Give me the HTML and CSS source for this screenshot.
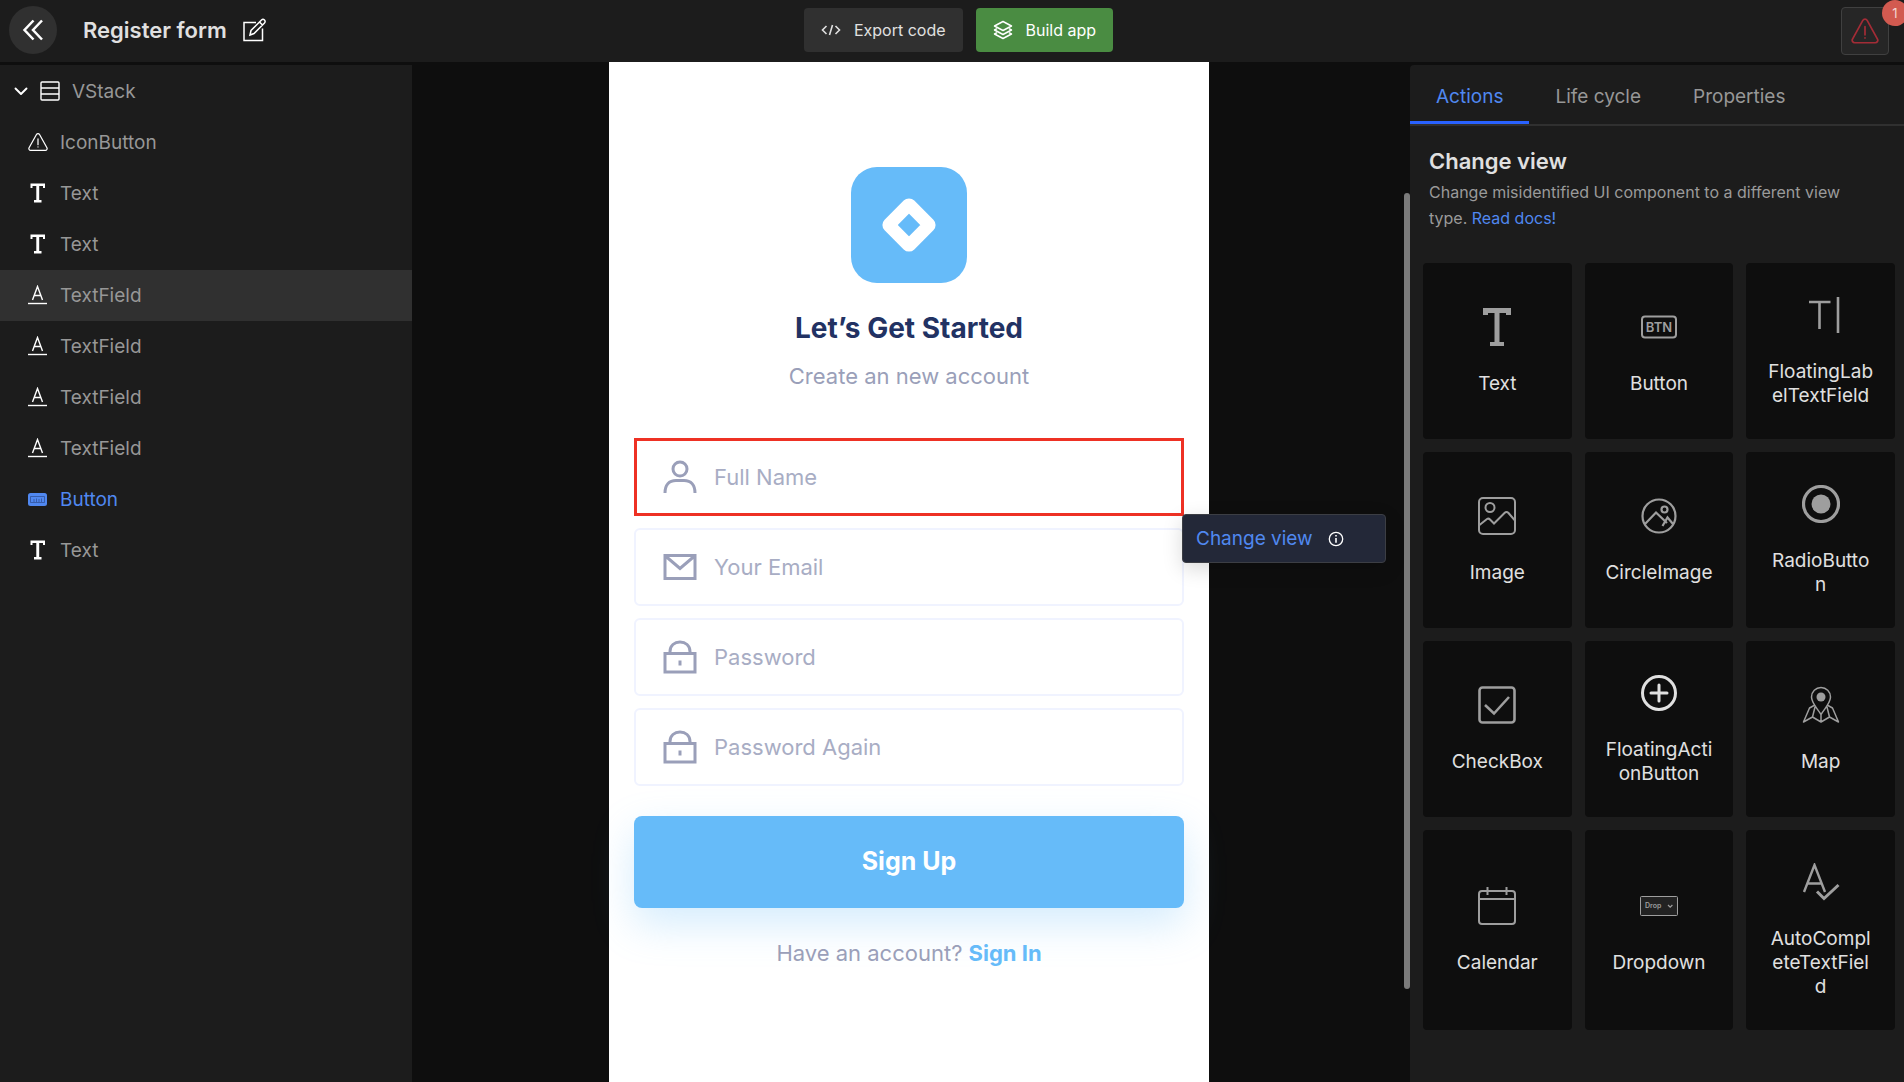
FILE: index.html
```html
<!DOCTYPE html>
<html lang="en">
<head>
<meta charset="utf-8">
<meta name="viewport" content="width=device-width, initial-scale=1">
<title>Register form</title>
<link rel="stylesheet" href="styles.css">
</head>
<body>
<svg class="sprite" aria-hidden="true">
  <symbol id="i-text" viewBox="0 0 20 20"><path d="M2.500 0.500h14.500V5h-2V3H11.200v14H13.500v2.500H6V17h2.300V3H4.500v2h-2z" fill="currentColor"/></symbol>
  <symbol id="i-field" viewBox="0 0 20 20" fill="none" stroke="currentColor"><path d="M4.500 15 9.500 1.500 14.500 15M6.100 10.500h6.800" stroke-width="1.400"/><path d="M0 18.500h19" stroke-width="1.400"/></symbol>
  <symbol id="i-warn" viewBox="0 0 26 24" fill="none" stroke="currentColor" stroke-width="1.600" stroke-linecap="round"><path d="M11 2.200a2.300 2.300 0 0 1 4 0l9.600 17.300a2.300 2.300 0 0 1-2 3.400H3.400a2.300 2.300 0 0 1-2-3.400z"/><path d="M13 8v7.500M13 18.400v.1"/></symbol>
  <symbol id="i-lock" viewBox="0 0 34 34" fill="none" stroke="currentColor" stroke-width="3"><path d="M2 13.500h30v18.500H2zM7 13V11.500C7 5.500 11.500 2 17 2s10 3.500 10 9.500V13M17 20.500v5"/></symbol>
</svg>

<div class="app">
  <header class="topbar">
    <div class="project">
      <button class="back" type="button" aria-label="Back"><svg width="22" height="22" viewBox="0 0 22 22" fill="none" stroke="currentColor" stroke-width="2.500"><path d="M11.500 1.500 2.500 11l9 9.500M20 1.500 11 11l9 9.500"/></svg></button>
      <h1 class="title">Register form</h1>
      <button class="plain" type="button" aria-label="Rename"><svg width="24" height="24" viewBox="0 0 24 24" fill="none" stroke="currentColor" stroke-width="1.500"><path d="M14 4.500H2V22.500H20.500V10.500M8 17l1-4.500L19.500 2a1.900 1.900 0 0 1 3 3L12 15.500zM17.500 4l3 3"/></svg></button>
    </div>
    <div class="commands">
      <button class="cmd" type="button"><svg width="20" height="12" viewBox="0 0 20 12" fill="none" stroke="currentColor" stroke-width="1.600"><path d="M5.500 2 1.500 6l4 4M14.500 2l4 4-4 4M11.500 1l-3 10"/></svg>Export code</button>
      <button class="cmd build" type="button"><svg width="20" height="20" viewBox="0 0 20 20" fill="none" stroke="currentColor" stroke-width="1.500" stroke-linejoin="round"><path d="M10 1.500 18.500 6 10 10.500 1.500 6zM4 8.600 1.500 10 10 14.500 18.500 10 16 8.600M4 12.600 1.500 14 10 18.500 18.500 14 16 12.600"/></svg>Build app</button>
    </div>
    <button class="alert" type="button" aria-label="Warnings"><svg width="28" height="26"><use href="#i-warn"/></svg><span class="badge">1</span></button>
  </header>

  <div class="workspace">
    <nav class="tree">
      <button class="node root" type="button"><svg width="14" height="9" viewBox="0 0 14 9" fill="none" stroke="currentColor" stroke-width="1.900" stroke-linecap="round" stroke-linejoin="round"><path d="M1.500 1.500 7 7l5.500-5.500"/></svg><svg width="20" height="20" viewBox="0 0 20 20" fill="none" stroke="currentColor" stroke-width="1.400"><rect x="1" y="1" width="18" height="18" rx="1"/><path d="M1 7h18M1 13h18"/></svg><span>VStack</span></button>
      <button class="node" type="button"><svg width="20" height="20"><use href="#i-warn"/></svg><span>IconButton</span></button>
      <button class="node" type="button"><svg width="20" height="20"><use href="#i-text"/></svg><span>Text</span></button>
      <button class="node" type="button"><svg width="20" height="20"><use href="#i-text"/></svg><span>Text</span></button>
      <button class="node selected" type="button"><svg width="20" height="20"><use href="#i-field"/></svg><span>TextField</span></button>
      <button class="node" type="button"><svg width="20" height="20"><use href="#i-field"/></svg><span>TextField</span></button>
      <button class="node" type="button"><svg width="20" height="20"><use href="#i-field"/></svg><span>TextField</span></button>
      <button class="node" type="button"><svg width="20" height="20"><use href="#i-field"/></svg><span>TextField</span></button>
      <button class="node accent" type="button"><svg width="20" height="20" viewBox="0 0 20 20"><rect x="0" y="4" width="19" height="13" rx="2.500" fill="currentColor"/><path d="M2.500 7.500h14v6h-14zM6 10v3M8.500 9.500v3.500M11 10v3M13.500 9.500v3.500" fill="none" stroke="#2c4a8c" stroke-width="0.700"/></svg><span>Button</span></button>
      <button class="node" type="button"><svg width="20" height="20"><use href="#i-text"/></svg><span>Text</span></button>
    </nav>

    <main class="canvas">
      <form class="phone">
        <svg class="logo" width="116" height="116" viewBox="0 0 116 116"><rect width="116" height="116" rx="26" fill="#66bbf9"/><rect x="43.500" y="43.500" width="29" height="29" rx="1" transform="rotate(45 58 58)" fill="none" stroke="#fff" stroke-width="13" stroke-linejoin="round"/></svg>
        <h2 class="headline">Let’s Get Started</h2>
        <p class="sub">Create an new account</p>
        <div class="fields">
          <label class="field picked"><svg width="34" height="34" viewBox="0 0 34 34" fill="none" stroke="currentColor" stroke-width="3"><circle cx="17" cy="9" r="7"/><path d="M2 33c0-8 4-12.500 11-12.500h8c7 0 11 4.500 11 12.500"/></svg><input type="text" placeholder="Full Name" aria-label="Full Name"></label>
          <label class="field"><svg width="34" height="34" viewBox="0 0 34 34" fill="none" stroke="currentColor" stroke-width="3"><path d="M2 5.500h30v23H2zM3 6.500l14 12 14-12"/></svg><input type="email" placeholder="Your Email" aria-label="Your Email"></label>
          <label class="field"><svg width="34" height="34"><use href="#i-lock"/></svg><input type="password" placeholder="Password" aria-label="Password"></label>
          <label class="field"><svg width="34" height="34"><use href="#i-lock"/></svg><input type="password" placeholder="Password Again" aria-label="Password Again"></label>
          <button class="tip" type="button">Change view<svg width="16" height="16" viewBox="0 0 16 16" fill="none" stroke="#fff"><circle cx="8" cy="8" r="6.700" stroke-width="1.300"/><path d="M8 7v4.800M8 4v1.600" stroke-width="1.600"/></svg></button>
        </div>
        <button class="signup" type="button">Sign Up</button>
        <p class="signin">Have an account? <a href="#">Sign In</a></p>
      </form>
    </main>
    <div class="scrollbar"></div>

    <aside class="panel">
      <div class="tabs" role="tablist">
        <button class="tab active" type="button" role="tab" aria-selected="true">Actions</button>
        <button class="tab" type="button" role="tab" aria-selected="false">Life cycle</button>
        <button class="tab" type="button" role="tab" aria-selected="false">Properties</button>
      </div>
      <div class="intro">
        <h2>Change view</h2>
        <p>Change misidentified UI component to a different view type. <a href="#">Read docs!</a></p>
      </div>
      <div class="cards">
        <button class="card" type="button"><svg viewBox="0 0 38 38"><path d="M5 0h28v7h-5V5h-6.500v29H26v4.500H12V34h4.500V5H10v2H5z" fill="currentColor"/></svg><span>Text</span></button>
        <button class="card" type="button"><svg viewBox="0 0 38 38"><rect x="2" y="8.500" width="34" height="21" rx="3" fill="none" stroke="currentColor" stroke-width="2"/><text class="btn-glyph" x="19" y="24" text-anchor="middle">BTN</text></svg><span>Button</span></button>
        <button class="card" type="button"><svg viewBox="0 0 38 38" fill="none" stroke="currentColor" stroke-width="2.600"><path d="M7 6h21.500M17.500 6v27M36 1v36"/></svg><span>FloatingLab<br>elTextField</span></button>
        <button class="card" type="button"><svg viewBox="0 0 38 38" fill="none" stroke="currentColor" stroke-width="2"><rect x="1" y="1" width="36" height="36" rx="4"/><circle cx="12" cy="10.500" r="4.500"/><path d="M1.500 28 9 22q1.500-1 3 .5L16 26.500 26.500 16q2-2 4 0L36.500 23"/></svg><span>Image</span></button>
        <button class="card" type="button"><svg viewBox="0 0 38 38" fill="none" stroke="currentColor" stroke-width="2.200"><circle cx="19" cy="19" r="16.500"/><circle cx="24.500" cy="12.500" r="3"/><path d="M5 27 16 15.500 27 26M22.500 29l5-8.500 5.500 6.500"/></svg><span>CircleImage</span></button>
        <button class="card" type="button"><svg viewBox="0 0 38 38"><circle cx="19" cy="19" r="17.500" fill="none" stroke="currentColor" stroke-width="3.200"/><circle cx="19" cy="19" r="9.500" fill="currentColor"/></svg><span>RadioButto<br>n</span></button>
        <button class="card" type="button"><svg viewBox="0 0 38 38" fill="none" stroke="currentColor" stroke-width="2.600"><rect x="1.500" y="1.500" width="35" height="35" rx="3"/><path d="M7 19l9 8.500L31 11"/></svg><span>CheckBox</span></button>
        <button class="card" type="button"><svg class="bright" viewBox="0 0 38 38" fill="none" stroke="currentColor" stroke-width="3"><circle cx="19" cy="19" r="16.500"/><path d="M19 11v16M11 19h16" stroke-linecap="round"/></svg><span>FloatingActi<br>onButton</span></button>
        <button class="card" type="button"><svg viewBox="0 0 38 38" fill="none" stroke="currentColor" stroke-width="1.500" stroke-linejoin="round"><path d="M19 28.500C15 22 9.500 17 9.500 11a9.500 9.500 0 0 1 19 0c0 6-5.500 11-9.500 17.500zM12 19.500 7.500 22 1.500 36l9-5 8.500 5 8.500-5 9 5-6-14-4.500-2.500M13 21l-2.500 10M25 21l2.500 10M19 28.500V36"/><circle cx="19" cy="11" r="4.500" fill="currentColor" stroke="none"/></svg><span>Map</span></button>
        <button class="card" type="button"><svg viewBox="0 0 38 38" fill="none" stroke="currentColor" stroke-width="2"><rect x="1" y="4" width="36" height="33" rx="3"/><path d="M1 12h36M9.500 0v8M28.500 0v8"/></svg><span>Calendar</span></button>
        <button class="card" type="button"><svg viewBox="0 0 38 38"><rect x="0.500" y="9.500" width="37" height="19" rx="1" fill="#222" stroke="currentColor"/><text class="drop-glyph" x="5" y="21">Drop</text><path d="M28 18l2.200 2.200L32.400 18" fill="none" stroke="currentColor" stroke-width="1.200"/></svg><span>Dropdown</span></button>
        <button class="card" type="button"><svg viewBox="0 0 38 38" fill="none" stroke="currentColor"><path d="M2 29 12.500 2 23 29M5.500 20.500h14" stroke-width="2.400"/><path d="M15 28.500l7 7L36.500 22" stroke-width="3"/></svg><span>AutoCompl<br>eteTextFiel<br>d</span></button>
      </div>
    </aside>
  </div>
</div>
</body>
</html>
```
FILE: styles.css
```css
* { box-sizing: border-box; }

body {
  margin: 0;
  background: #0e0e0e;
  color: #e0e0e0;
  font-family: Inter, "Liberation Sans", sans-serif;
}

h1, h2, p { margin: 0; }
a { text-decoration: none; }
svg { flex: none; display: block; }
button { font: inherit; color: inherit; border: 0; background: none; padding: 0; cursor: pointer; }

.sprite { position: absolute; width: 0; height: 0; }

.app { display: flex; flex-direction: column; min-height: 100vh; }

/* Top bar */
.topbar {
  display: grid;
  grid-template-columns: 1fr auto 1fr;
  align-items: center;
  height: 62px;
  padding: 0 0 2px 9px;
  background: #1c1c1c;
  overflow: hidden;
}
.project { display: flex; align-items: center; }
.back {
  display: grid;
  place-items: center;
  width: 48px;
  height: 48px;
  margin-right: 26px;
  border-radius: 50%;
  background: #303030;
  color: #fff;
}
.title { font-size: 22px; font-weight: 600; line-height: 28px; margin-right: 15px; }
.plain { color: #fff; }
.commands { display: flex; gap: 13px; padding-left: 4px; }
.cmd {
  display: flex;
  align-items: center;
  gap: 13px;
  height: 44px;
  padding: 0 17px;
  border-radius: 4px;
  background: #303030;
  font-size: 16px;
}
.build { background: #4a8c42; color: #fff; }
.alert {
  position: relative;
  display: grid;
  place-items: center;
  justify-self: end;
  width: 48px;
  height: 48px;
  margin: 2px 15px 0 0;
  border: 1px solid #404040;
  border-radius: 4px;
  background: #262626;
  color: #a32c36;
}
.badge {
  position: absolute;
  top: -8px;
  right: -20px;
  width: 26px;
  height: 26px;
  border-radius: 50%;
  background: #d25a50;
  color: #f4d6d3;
  font-size: 13px;
  line-height: 26px;
  text-align: center;
}

.workspace { display: flex; flex: 1; }

/* Component tree */
.tree {
  flex: 0 0 412px;
  margin: 3px 2px 0 0;
  padding-top: 1px;
  background: #1c1c1c;
}
.node {
  display: flex;
  align-items: center;
  gap: 12px;
  width: 100%;
  height: 51px;
  padding: 0 0 1px 28px;
  color: #fff;
  font-size: 19px;
  text-align: left;
}
.node span { color: #979797; }
.root { padding-left: 14px; }
.selected { background: #303030; }
.accent, .accent span { color: #5088f0; }

/* Canvas */
.canvas { display: flex; justify-content: center; flex: 1; }
.phone {
  width: 600px;
  padding: 105px 25px 0;
  background: #fff;
  text-align: center;
  color: #9a9fb9;
}
.logo { margin: 0 auto; }
.headline { margin-top: 27px; color: #223263; font-size: 28px; font-weight: 700; line-height: 36px; }
.sub { margin-top: 16px; font-size: 22px; line-height: 28px; }
.fields {
  position: relative;
  display: flex;
  flex-direction: column;
  gap: 12px;
  margin-top: 48px;
}
.field {
  display: flex;
  align-items: center;
  gap: 17px;
  height: 78px;
  padding: 0 27px;
  border: 2px solid #f0f3ff;
  border-radius: 6px;
}
.picked { border: 3px solid #ee3124; border-radius: 0; padding: 0 26px; }
.field input {
  flex: 1;
  min-width: 0;
  padding: 0;
  border: 0;
  outline: 0;
  background: none;
  color: inherit;
  font: inherit;
  font-size: 22px;
}
.field input::placeholder { color: #a8adc4; opacity: 1; }
.tip {
  position: absolute;
  top: 76px;
  left: 548px;
  display: flex;
  align-items: center;
  gap: 15px;
  width: 204px;
  height: 49px;
  padding: 0 13px;
  border: 1px solid #3c3e44;
  border-radius: 4px;
  background: #232838;
  box-shadow: 0 6px 20px rgba(0, 0, 0, 0.15);
  color: #5088f0;
  font-size: 19px;
}
.signup {
  width: 100%;
  height: 92px;
  margin-top: 30px;
  padding-bottom: 2px;
  border-radius: 8px;
  background: #66bbf9;
  box-shadow: 0 16px 40px rgba(102, 187, 249, 0.28);
  color: #fff;
  font-size: 25px;
  font-weight: 700;
}
.signin { margin-top: 31px; font-size: 22px; line-height: 28px; }
.signin a { color: #66bbf9; font-weight: 700; }

.scrollbar { flex: 0 0 6px; margin: 131px 0 93px; border-radius: 3px; background: #7b7b7b; }

/* Actions panel */
.panel {
  flex: 0 0 494px;
  margin-top: 3px;
  border-radius: 4px 0 0 0;
  background: #1c1c1c;
}
.tabs { display: flex; border-bottom: 2px solid #303030; }
.tab {
  height: 59px;
  padding: 6px 26px 0;
  border-bottom: 3px solid transparent;
  color: #979797;
  font-size: 19px;
}
.active { border-bottom-color: #2962ff; color: #5088f0; }
.intro { padding: 20px 48px 0 19px; }
.intro h2 { font-size: 22px; font-weight: 600; line-height: 30px; }
.intro p { margin-top: 3px; color: #9a9a9a; font-size: 16px; line-height: 26px; }
.intro a { color: #5088f0; }
.cards {
  display: grid;
  grid-template-columns: repeat(3, 1fr);
  gap: 13px;
  padding: 32px 9px 52px 13px;
}
.card {
  display: flex;
  flex-direction: column;
  align-items: center;
  justify-content: center;
  gap: 26px;
  min-height: 176px;
  padding: 33px 16px 31px;
  border-radius: 4px;
  background: #0e0e0e;
  color: #e0e0e0;
  font-size: 19px;
  line-height: 24px;
}
.card svg { width: 38px; height: 38px; color: #9e9e9e; }
.card .bright { color: #e0e0e0; }
.btn-glyph { font-size: 13px; font-weight: 600; fill: currentColor; }
.drop-glyph { font-size: 7px; font-weight: 600; fill: currentColor; }
```
